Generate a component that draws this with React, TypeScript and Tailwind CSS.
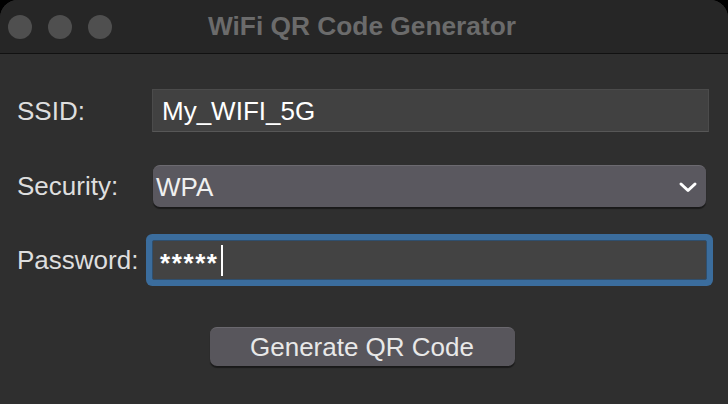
export default function App() {
  return (
    <main
      className="w-[728px] h-[404px] overflow-hidden bg-black"
      style={{ fontFamily: '"Liberation Sans", Arial, sans-serif' }}
    >
      <div className="flex h-full flex-col overflow-hidden rounded-t-[18px] bg-[#2f2f2f]">
        {/* title bar */}
        <div className="relative flex h-[54px] shrink-0 items-center border-b border-[#111111] bg-[#262626]">
          <div className="flex gap-4 pl-2">
            <span className="h-6 w-6 rounded-full bg-[#4f4f4f]" />
            <span className="h-6 w-6 rounded-full bg-[#4f4f4f]" />
            <span className="h-6 w-6 rounded-full bg-[#4f4f4f]" />
          </div>
          <h1 className="absolute inset-x-0 pr-[4px] text-center text-[26.3px] font-bold leading-none text-[#6b6b6b]">
            WiFi QR Code Generator
          </h1>
        </div>

        {/* form */}
        <div className="flex flex-col pl-[17px] pr-[19px] pt-[35px] text-[26px] leading-none">
          <div className="flex items-center">
            <label className="w-[135px] text-[#dedede]">SSID:</label>
            <div className="flex h-[43px] flex-1 items-center border border-[#4b4b4b] border-b-[#575757] bg-[#414141] pl-[9px] text-white">
              My_WIFI_5G
            </div>
          </div>

          <div className="mt-[33px] flex items-center">
            <label className="w-[136px] text-[#dedede]">Security:</label>
            <div className="mr-[3px] flex h-[42px] flex-1 items-center justify-between rounded-[7px] border-t border-[#6c6a70] bg-[#5a585f] pl-[3px] pr-[8px] text-[#f0f0f0] shadow-[0_2px_1px_rgba(0,0,0,0.45)]">
              <span>WPA</span>
              <svg width="20" height="14" viewBox="0 0 20 14" fill="none">
                <path d="M3 4l7 6.5L17 4" stroke="white" strokeWidth="3" strokeLinecap="round" strokeLinejoin="round" />
              </svg>
            </div>
          </div>

          <div className="mt-[33px] flex items-center">
            <label className="w-[135px] text-[#dedede]">Password:</label>
            <div className="mr-[2px] flex h-[40px] flex-1 items-center rounded-[2px] border border-[#2f4f6e] bg-[#434343] pl-[7px] text-white ring-[6px] ring-[#3b6d9d]">
              <span className="translate-y-[3px] text-[26px] font-bold tracking-[1.6px]">*****</span>
              <span className="ml-[2px] h-[31px] w-[2px] bg-white" />
            </div>
          </div>

          <div className="mt-[47px] flex justify-center pr-[2px]">
            <button className="flex h-[39px] w-[305px] items-center justify-center rounded-[7px] border-t border-[#6a686e] bg-[#58565c] text-[26px] text-[#e8e8e8] shadow-[0_2px_1px_rgba(0,0,0,0.45)]">
              Generate QR Code
            </button>
          </div>
        </div>
      </div>
    </main>
  );
}
